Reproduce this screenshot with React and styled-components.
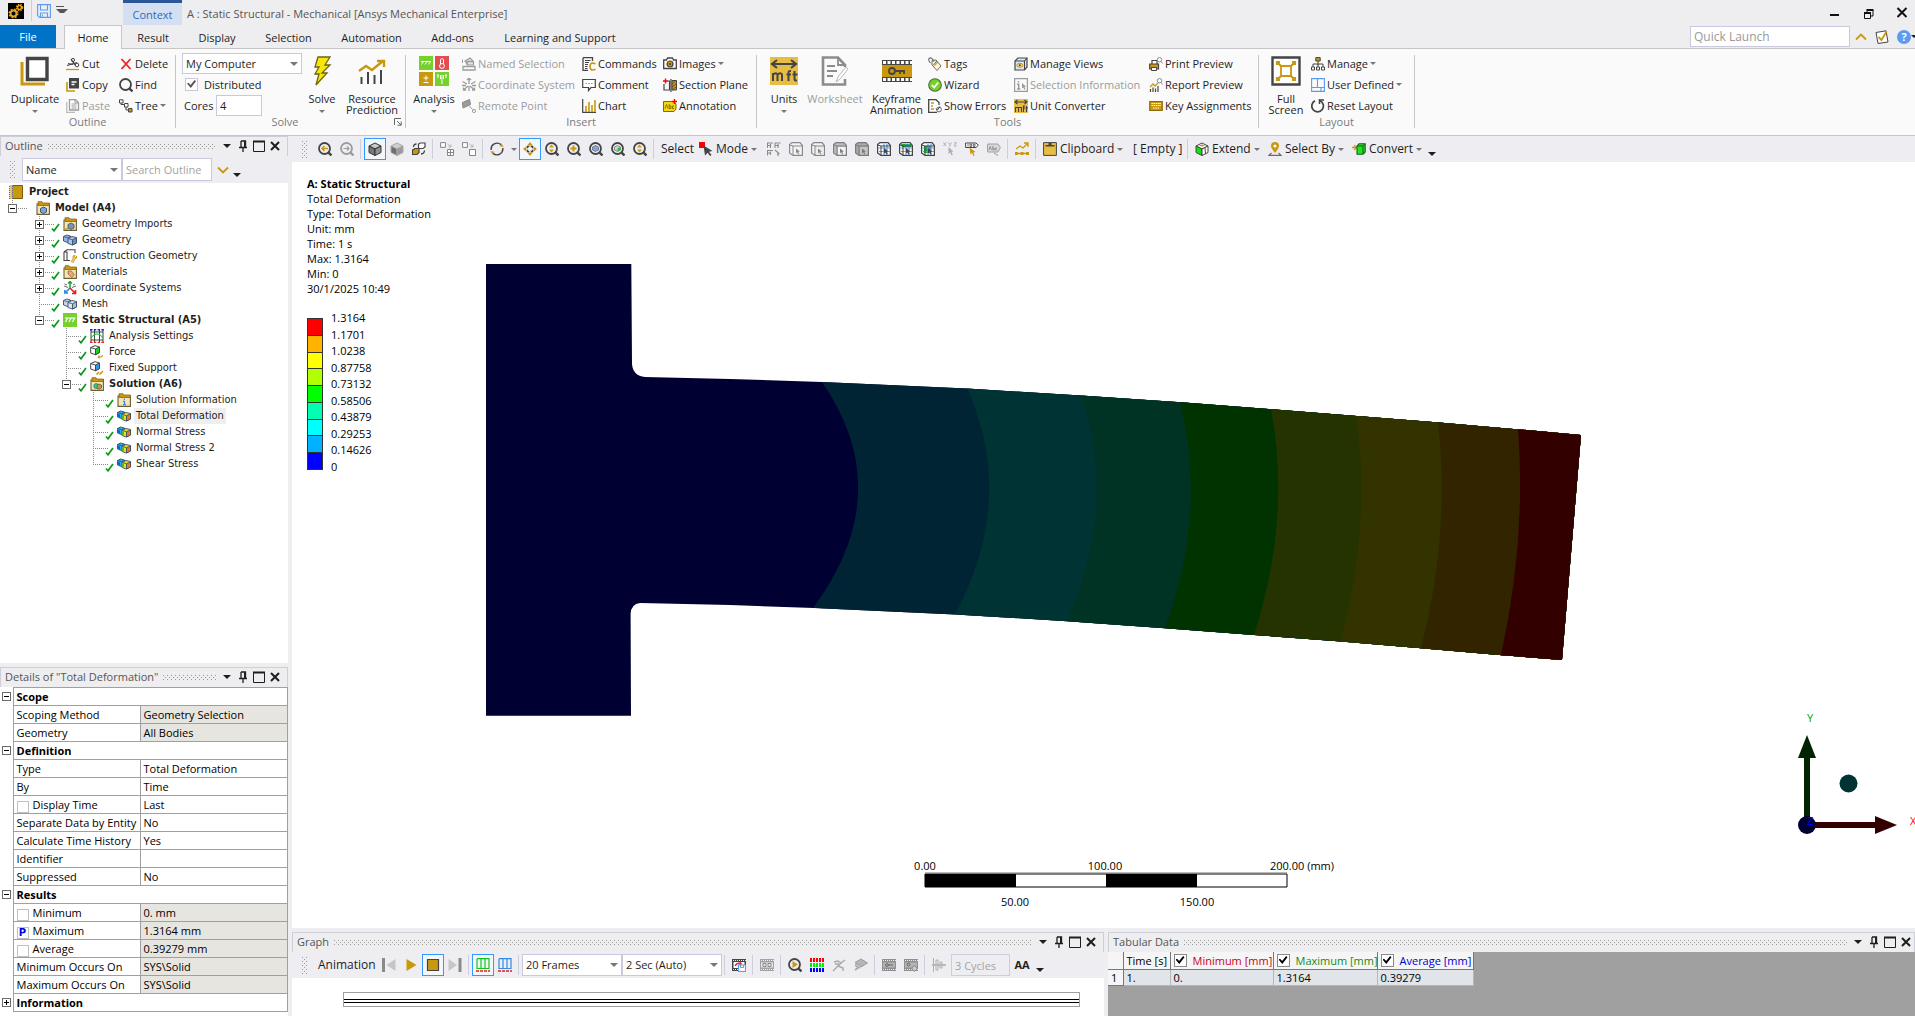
import React from "react";
import styled, { createGlobalStyle, css } from "styled-components";

const GOLD = "#c9980f";
const DARK = "#444444";
const GREY = "#9c9c9c";
const BLUE = "#5b9bf0";
const GREEN = "#77d12c";

/* ---------- shared icon pieces ---------- */

const lens = (color = DARK) => (
  <>
    <circle cx="6.5" cy="6.5" r="5.5" fill="none" stroke={color} strokeWidth="1.8" />
    <path d="M10.3 10.3L13.5 13.5" stroke={color} strokeWidth="2.4" />
  </>
);

const cube = (front, top, side, line = DARK) => (
  <>
    <path d="M1 4L7 1L13 4L7 7Z" fill={top} stroke={line} />
    <path d="M1 4L7 7V13.5L1 10.5Z" fill={front} stroke={line} />
    <path d="M13 4L7 7V13.5L13 10.5Z" fill={side} stroke={line} />
  </>
);

const pickCube = (face, top, line, arrow = line) => (
  <>
    <path d="M0.6 2.5L3 0.6H11L13.4 3.5V13.4H4L0.6 11Z" fill={top} stroke={line} strokeWidth="1.2" />
    <path d="M1 3L4 4V13M4 4H13" fill="none" stroke={line} />
    <path d="M5 5H12.5V12.5H5Z" fill={face} />
    <path d="M7 6.5L11 9.5L9.2 9.8L10.2 12L9.2 12.4L8.3 10.2L7 11.3Z" fill={arrow} />
  </>
);

const meshCube = (fill) => (
  <>
    <path d="M0.6 2.5L3 0.6H11L13.4 3.5V13.4H4L0.6 11Z" fill="#fff" stroke={DARK} strokeWidth="1.3" />
    {fill}
    <path d="M7 2V13M10 2V13M1.5 6H13M2 9.5H13" fill="none" stroke={BLUE} strokeWidth="1.2" />
    <path d="M1 3L4 4H13M4 4V13" fill="none" stroke={DARK} />
    <path d="M7 6L11.5 9.5L9.5 9.8L10.5 12L9.3 12.5L8.3 10.4L7 11.5Z" fill={DARK} />
  </>
);

const folder = (
  <>
    <path d="M1 3V13.4H13.4V3Z" fill="#f5e6b8" stroke="#6b5f3a" strokeWidth="1.1" />
    <path d="M2 3V0.7H6L7 2H13.4V4.5H2Z" fill={GOLD} stroke="#7b5c08" strokeWidth="0.7" />
  </>
);

const pairCubes = (a, b, c, line = "#3d4f63") => (
  <>
    <path d="M0.5 3.5L3.5 2L7.5 3V8.5L4.5 9.5L0.5 8Z" fill={a} stroke={line} strokeWidth="0.9" />
    <path d="M0.5 3.5L4.5 4.7L7.5 3.5" fill="none" stroke={line} strokeWidth="0.8" />
    <path d="M5 5.5L9 3.5L13.5 4.5V10L9.5 12L5 10.5Z" fill={b} stroke={line} strokeWidth="0.9" />
    <path d="M9.5 6.8L13.5 4.8V10L9.5 12Z" fill={c} stroke={line} strokeWidth="0.9" />
    <path d="M5 5.5L9.5 6.8" fill="none" stroke={line} strokeWidth="0.8" />
  </>
);

const film = (color, inner) => (
  <>
    <path d="M0 1H14V13H0Z" fill={color} />
    <path d="M1 2.5H14M1 11.5H14" stroke="#eeeef2" strokeWidth="1.2" strokeDasharray="1 1" />
    {inner}
  </>
);

const unitMark = (
  <>
    <path d="M0 0H14V14H0Z" fill="#e6bd45" />
    <path d="M1 3H13M3.5 1L1 3L3.5 5M10.5 1L13 3L10.5 5" fill="none" stroke={DARK} strokeWidth="1.2" />
    <path d="M1.5 13V8M1.5 8.5H4.5V13M4.5 8.5H7.5V13M9.5 13V7H11M8.8 9H11M12.5 7V13M11.5 9H14" fill="none" stroke={DARK} strokeWidth="1.1" />
  </>
);

const ICONS = {
  cut: (
    <>
      <path d="M0 12.5H13" stroke={GOLD} strokeWidth="1.3" />
      <path d="M1 8.5L11 5.5M5 2L9 8" stroke={DARK} strokeWidth="1.3" />
      <circle cx="7" cy="3" r="1.6" fill="none" stroke={DARK} />
      <circle cx="11" cy="8" r="1.8" fill="none" stroke={DARK} />
      <path d="M2 6.5L7 7.5" stroke={DARK} strokeWidth="1.2" />
    </>
  ),
  copy: (
    <>
      <path d="M1 4V13H9" fill="none" stroke={GOLD} strokeWidth="1.6" />
      <path d="M3 0H13V10.5H3Z" fill={DARK} />
      <path d="M5.5 4H10.5M5.5 6.5H8.5" stroke="#fff" strokeWidth="1.3" />
    </>
  ),
  paste: (
    <>
      <path d="M0.7 3V13.3H9" fill="none" stroke="#b9b9b9" strokeWidth="1.2" />
      <path d="M3.5 0.7H9.5L12.5 3.7V11H3.5Z" fill="#fff" stroke={GREY} strokeWidth="1.3" />
      <path d="M5.5 5H10.5M5.5 7H10.5M5.5 9H10.5M9 1V4H12" fill="none" stroke={GREY} />
    </>
  ),
  remove: <path d="M2.5 2L11.5 12M11.5 2L2.5 12" stroke="#f01c1c" strokeWidth="1.7" />,
  find: lens(),
  tree: (
    <>
      <path d="M2 3V5.5H7V11H9" fill="none" stroke={DARK} />
      <path d="M0.5 0.8H4V4H0.5ZM5.5 4.5H9V8H5.5Z" fill="#fff" stroke={DARK} />
      <path d="M9.5 9.5H13V13H9.5Z" fill={GOLD} stroke={DARK} />
    </>
  ),
  namedSel: (
    <>
      <path d="M3 4L8 1L11.5 4.5V8H5.5Z" fill="#e3e3e3" stroke={GREY} strokeWidth="1.2" />
      <path d="M5.5 8L5 4.5L11 4.5M1 9.5H13V13H1Z" fill="none" stroke={GREY} strokeWidth="1.3" />
      <path d="M0.5 2.5V6" stroke={GREY} />
    </>
  ),
  coordGrey: (
    <path d="M7 0V6M7 8V13M0.5 3.5L5 6M13.5 3.5L9 6M1.5 12L6 8M12.5 12L8 8M0 7.5H4M10 7.5H14M5 2L7 0L9 2M1.5 9.5V12H4M12.5 9.5V12H10" fill="none" stroke={GREY} strokeWidth="1.3" />
  ),
  remote: (
    <>
      <path d="M0.5 3.5L7.5 0.5L8.5 5.5L1 9Z" fill={GREY} stroke="#858585" />
      <path d="M7 6.5L10.5 10.5" stroke={GREY} />
      <circle cx="12" cy="12" r="1.6" fill="none" stroke={GREY} />
    </>
  ),
  commands: (
    <>
      <path d="M1 0.7H10.5V4M1 0.7V13.3H6" fill="none" stroke={DARK} strokeWidth="1.3" />
      <path d="M3 3.5H8.5M3 5.5H7M3 7.5H6M3 9.5H5.5M3 11.5H5.5" stroke={DARK} />
      <path d="M13.5 6.8Q8 4.5 8 9.5Q8 14.5 13.5 12.3" fill="none" stroke={GOLD} strokeWidth="1.7" />
    </>
  ),
  comment: (
    <>
      <path d="M0.7 1.5H13.3V9.5H9L6.5 12.5V9.5H0.7Z" fill="#fff" stroke={DARK} strokeWidth="1.2" />
      <path d="M3.5 5.5H11" stroke={GOLD} strokeWidth="1.2" strokeDasharray="1.5 1.3" />
    </>
  ),
  chart: (
    <>
      <path d="M0.7 0V13.3H14" fill="none" stroke={DARK} strokeWidth="1.2" />
      <path d="M4 13V7M7 13V3M10 13V6M13 13V1" stroke={GOLD} strokeWidth="1.6" />
    </>
  ),
  camera: (
    <>
      <path d="M1 3H3.5L4.5 1H9.5L10.5 3H13.3V11.5H0.7V3Z" fill="#fff" stroke={DARK} strokeWidth="1.3" />
      <circle cx="7" cy="7" r="3" fill={GOLD} stroke={DARK} strokeWidth="1.2" />
      <circle cx="7" cy="7" r="1.1" fill={DARK} />
    </>
  ),
  section: (
    <>
      <path d="M1 6V12H6.5V3H5M8 1V14" fill="none" stroke={DARK} strokeWidth="1.2" />
      <path d="M9 2.5H13.5V12H9Z" fill={GOLD} stroke={DARK} />
      <path d="M9 6L13 2.5M9 9L13.5 5.5M9 12L13.5 8.5" stroke={DARK} strokeWidth="0.8" />
      <path d="M0 3H5M2.5 0.5V5.5" stroke="#ff0000" strokeWidth="1.4" />
    </>
  ),
  annotation: (
    <>
      <path d="M0.5 2.5H10L13 5V10L11 12.5H0.5Z" fill="#f5d80c" stroke="#7b6a0a" />
      <path d="M2 9.5L3.5 5.5L5 9.5M6.2 5V9.5H8V7H6.2M11 7H9.5V9.5H11" fill="none" stroke="#7b6a0a" strokeWidth="0.9" />
      <path d="M9 2.5H14M11.5 0V5" stroke="#ff0000" strokeWidth="1.4" />
    </>
  ),
  tags: (
    <>
      <path d="M4 3.5L8 3L13 9L9 13.5L4 8Z" fill="#fff3d0" stroke="#6b6b6b" />
      <path d="M2.5 6Q0 3.5 1 1.5Q3.5 -0.5 6 4.5M5.5 8L9 4" fill="none" stroke="#6b6b6b" strokeWidth="1.1" />
      <path d="M6.5 9L10 5" stroke={GOLD} />
    </>
  ),
  wizard: (
    <>
      <circle cx="7" cy="7" r="6.3" fill={GREEN} stroke="#4c6b3a" strokeWidth="1.1" />
      <path d="M3.8 7L6.2 9.5L10.2 4.5" fill="none" stroke="#fff" strokeWidth="1.8" />
    </>
  ),
  errors: (
    <>
      <path d="M9 13.3H0.7V0.7H8L11 3.5V6" fill="#fff" stroke={DARK} strokeWidth="1.3" />
      <path d="M3 4H6M3 7H5M3 10H6" stroke={GOLD} strokeWidth="1.5" />
      <circle cx="11" cy="10.5" r="2.4" fill="none" stroke="#6b6b6b" />
      <path d="M8 9.5L9.5 11L12 7.5" fill="none" stroke={DARK} />
    </>
  ),
  views: (
    <>
      <path d="M1 4L4 1H13V10L10.5 13H1Z" fill="#dce9fb" stroke={DARK} strokeWidth="1.2" />
      <path d="M1 4H10.5V13M10.5 4L13 1" fill="none" stroke={DARK} strokeWidth="1.1" />
      <ellipse cx="5.8" cy="8.3" rx="3" ry="2" fill="#f0d898" stroke={GOLD} />
      <circle cx="5.8" cy="8.3" r="1" fill={DARK} />
    </>
  ),
  selInfo: (
    <>
      <path d="M0.6 0.6H13.4V13.4H0.6Z" fill="none" stroke={GREY} strokeWidth="1.2" />
      <path d="M4.5 3V4.5M3 6.3H4.7V11M3 11H6.3" fill="none" stroke={GREY} strokeWidth="1.5" />
      <path d="M8 5L12 8.5L10.5 9L11.5 11.5L10.3 11.5L9.5 9.5L8 10.5Z" fill={GREY} />
    </>
  ),
  unitMark,
  print: (
    <>
      <path d="M3 7V3.5H8V7" fill="#fff" stroke={DARK} strokeWidth="1.2" />
      <path d="M0.7 7H9.5V12H0.7Z" fill={GOLD} stroke={DARK} strokeWidth="1.2" />
      <path d="M2.5 10.5H7.5V13.5H2.5Z" fill="#fff" stroke={DARK} />
      <circle cx="10.5" cy="2.7" r="2.2" fill="#fff" stroke="#888" />
      <path d="M12 4.5L13.5 6.5" stroke="#888" />
    </>
  ),
  report: (
    <>
      <path d="M1 9L4 6L6 8L9 5" fill="none" stroke={GOLD} strokeWidth="1.3" />
      <path d="M1.5 14V11M4 14V9.5M6.5 14V10.5M9 14V8" stroke={DARK} strokeWidth="1.2" />
      <circle cx="10.5" cy="2.7" r="2.2" fill="#fff" stroke="#888" />
      <path d="M12 4.5L13.5 6.5" stroke="#888" />
    </>
  ),
  keys: (
    <>
      <path d="M0.7 2.5H13.3V11.5H0.7Z" fill={GOLD} stroke="#8a6a0a" strokeWidth="1.1" />
      <path d="M2.5 4.5H12M2.5 6.5H12M4 9H10" stroke="#fff4d0" strokeWidth="1.2" strokeDasharray="1.6 0.6" />
    </>
  ),
  orgChart: (
    <>
      <path d="M7 4V8M2 10V7H12V10M7 7V10" fill="none" stroke={DARK} />
      <path d="M4.8 0.6H9.2V4H4.8Z" fill={GOLD} stroke={DARK} />
      <path d="M0.5 10H3.5V13H0.5ZM5.5 10H8.5V13H5.5ZM10.5 10H13.5V13H10.5Z" fill="#fff" stroke={DARK} />
    </>
  ),
  panes: <path d="M0.6 0.6H13.4V13.4H0.6ZM0.6 9.5H13.4M6.5 0.6V9.5M10 9.5V13" fill="none" stroke={BLUE} strokeWidth="1.1" />,
  reset: (
    <>
      <path d="M9 1.7A5.8 5.8 0 1 1 4 1.8" fill="none" stroke={DARK} strokeWidth="1.7" />
      <path d="M8.5 0V5M8.5 1H13" fill="none" stroke={DARK} strokeWidth="1.5" />
    </>
  ),
  save: (
    <>
      <path d="M0.6 0.6H13.4V13.4H2.5L0.6 11.5Z" fill="none" stroke={BLUE} strokeWidth="1.1" />
      <path d="M3.5 1V6H10.5V1M3.5 13V9H10.5V13M5.5 10.5V12.5" fill="none" stroke={BLUE} strokeWidth="1.1" />
    </>
  ),
  zoomBack: (
    <>
      {lens()}
      <path d="M10 6.5H4M6.5 4L4 6.5L6.5 9" fill="none" stroke={GOLD} strokeWidth="1.5" />
    </>
  ),
  zoomFwd: (
    <>
      {lens(GREY)}
      <path d="M3.5 6.5H9M7 4.5L9 6.5L7 8.5" fill="none" stroke={GREY} strokeWidth="1.2" />
    </>
  ),
  shaded: cube("#777", "#c9c9c9", "#909090", "#333"),
  shadedFlat: cube("#6e6e6e", "#cfcfcf", "#9a9a9a", "#a8a8a8"),
  swapCube: (
    <>
      <path d="M0.5 8L3 6.5H7V10.5L5 12.5H0.5Z" fill={GOLD} stroke={DARK} strokeWidth="1.2" />
      <path d="M6.5 2L8.5 1H13V5L11 6.5H6.5Z" fill="#fff" stroke={DARK} strokeWidth="1.2" />
      <path d="M1.5 5Q1.5 2 4.5 2M12.5 8.5Q12.5 11.5 9 12" fill="none" stroke={DARK} strokeWidth="1.3" />
    </>
  ),
  expandBox: (
    <>
      <path d="M0.6 0.6H5.4V5.4H0.6ZM7.5 7.5H13.5V13.5H7.5ZM10.5 7.5V13.5M7.5 10.5H13.5" fill="#fff" stroke="#858585" />
      <path d="M7.5 2L11 5M11 2.5V5H8.5" fill="none" stroke="#b5b5b5" />
    </>
  ),
  collapseBox: (
    <>
      <path d="M0.6 0.6H5.4V5.4H0.6ZM7.5 7.5H13.5V13.5H7.5Z" fill="#fff" stroke="#858585" />
      <path d="M7.5 2L11 5M11 2.5V5H8.5" fill="none" stroke="#b5b5b5" />
    </>
  ),
  rotate: (
    <>
      <path d="M1.2 8A6 6 0 0 1 11 2.6M12.8 6A6 6 0 0 1 3 11.4" fill="none" stroke={DARK} strokeWidth="1.4" />
      <path d="M11.5 1.2L13.6 5L9.6 4.2ZM2.5 12.8L0.4 9L4.4 9.8Z" fill={GOLD} />
    </>
  ),
  pan: (
    <>
      <path d="M7 0L9.8 3.5H4.2ZM7 14L9.8 10.5H4.2ZM0 7L3.5 4.2V9.8ZM14 7L10.5 4.2V9.8Z" fill={GOLD} />
      <path d="M4.5 6.3V4.5H6.3M7.7 4.5H9.5V6.3M9.5 7.7V9.5H7.7M6.3 9.5H4.5V7.7" fill="none" stroke={DARK} strokeWidth="1.3" />
    </>
  ),
  zoomUpDown: (
    <>
      {lens()}
      <path d="M6.5 2.5L9 5.5H4ZM6.5 10.5L9 7.5H4Z" fill={GOLD} />
    </>
  ),
  zoomIn: (
    <>
      {lens()}
      <path d="M6.5 3.5V9.5M3.5 6.5H9.5" stroke={GOLD} strokeWidth="2" />
    </>
  ),
  zoomCube: (
    <>
      {lens()}
      <path d="M3.5 5L6.5 3.5L9.5 5V8L6.5 9.5L3.5 8Z" fill="#8ea6cc" stroke="#5a6b8a" strokeWidth="0.8" />
    </>
  ),
  zoomGreen: (
    <>
      {lens()}
      <path d="M3.5 5L6.5 3.5L9.5 5V8L6.5 9.5L3.5 8Z" fill="#d0d0d0" stroke="#777" strokeWidth="0.8" />
      <path d="M6.5 6.5L9.5 5V8L6.5 9.5Z" fill="#15c52a" />
    </>
  ),
  mode: (
    <>
      <path d="M0 0H6V6H0Z" fill="#ff0000" />
      <path d="M4.5 3.5L13.5 9L10 9.7L12.5 13L11 14L8.7 10.8L6 13.5Z" fill={DARK} />
    </>
  ),
  pickGrid: (
    <path d="M0.5 6V1H6M0.5 3.5H4M8 1H13.5M8 6V1M8 3.5H12M0.5 13.5V8.5H6M0.5 11H4M8 8L12 11.5L10.5 12L11.5 14M3.5 2V6M11 2V6M3.5 9.5V13" fill="none" stroke="#8a8a8a" strokeWidth="1.1" />
  ),
  pickVertex: pickCube("none", "#f4f4f4", "#8a8a8a"),
  pickEdge: pickCube("#ececec", "#f4f4f4", "#858585"),
  pickFace: pickCube("#f4f4f4", "#bdbdbd", "#808080"),
  pickBody: pickCube("#c4c4c4", "#a9a9a9", "#7a7a7a"),
  meshNode: meshCube(null),
  meshFace: meshCube(<path d="M2 2H12V5H3Z" fill="#19a82e" />),
  meshElem: meshCube(<path d="M3 4H10V11H3Z" fill="#19a82e" />),
  xyz: (
    <>
      <path d="M0.5 0.5L3 4M3 0.5L0.5 4M5.5 0.5L7 2.5L8.5 0.5M7 2.5V4.5M11 0.8H13.5L11 4H13.5" fill="none" stroke="#b0b0b0" />
      <path d="M5.5 5L10.5 9.5L8.5 9.8L9.8 13L8.5 13.5L7.3 10.5L5.5 12Z" fill="#b0b0b0" />
    </>
  ),
  probe: (
    <>
      <path d="M0.6 1H11L13.4 3.2L11 5.5H0.6Z" fill="#fff" stroke={DARK} />
      <path d="M3 2.2V4.5M5 2.2H6.6V4.4H5ZM8.4 2.2H10V4.4H8.4Z" fill="none" stroke={DARK} strokeWidth="0.8" />
      <path d="M4.5 5.5L10.5 10L8.5 10.3L9.5 13.5L8.3 14L7.2 10.8L5.5 12.5Z" fill={GOLD} />
    </>
  ),
  label: (
    <>
      <path d="M0.6 2H11L13.4 5.5L11 10H0.6Z" fill="#d8d8d8" stroke="#a0a0a0" />
      <path d="M2 8L3.2 4.5L4.5 8M5.8 4V8H7.2V6H5.8M10 6H8.7V8H10M7 11L11 13.5" fill="none" stroke="#8c8c8c" strokeWidth="0.9" />
    </>
  ),
  trend: (
    <>
      <path d="M1 7L5 4L8 6L12.5 1.5M9 1H13V5M1 11.5H13" fill="none" stroke={GOLD} strokeWidth="1.3" />
      <path d="M0 10H3V13H0ZM5.5 10H8.5V13H5.5ZM11 10H14V13H11Z" fill={GOLD} />
    </>
  ),
  clipboard: (
    <>
      <path d="M0.6 0.6H13.4V13.4H0.6Z" fill="#e6bd45" stroke={DARK} />
      <path d="M2.5 3H11.5V4.5H2.5ZM5.5 1H8.5V3H5.5Z" fill={DARK} />
    </>
  ),
  extend: (
    <>
      {cube("#0ce60c", "#fff", "#fff")}
      <path d="M4.5 3.5H9.5M7 2.2V5" stroke={GOLD} />
      <path d="M10 6L10.5 12" stroke={DARK} />
    </>
  ),
  pinMap: (
    <>
      <path d="M7 11Q3 6 3 4A4 4 0 0 1 11 4Q11 6 7 11Z" fill={GOLD} />
      <circle cx="7" cy="4" r="1.6" fill="#fff" />
      <path d="M3.5 11L1 13.3H13L10.5 11" fill="none" stroke="#6b6b6b" strokeWidth="1.2" />
    </>
  ),
  convert: (
    <>
      <path d="M0 5.5H4M2.2 3.2L4.5 5.5L2.2 8" fill="none" stroke={GOLD} strokeWidth="1.3" />
      <path d="M5 4L7 1.8H13.2V10L11 12.2H5Z" fill="#19e61e" stroke="#1c5a1c" strokeWidth="1.1" />
      <path d="M5 4H11V12M11 4L13 2" fill="none" stroke="#1c5a1c" />
    </>
  ),
  project: (
    <>
      <path d="M3 0.5H13.5V13.5H3Z" fill={GOLD} stroke="#7b5c08" />
      <path d="M2 0V14" stroke="#d9c48a" strokeWidth="3" />
      <path d="M0.5 1V14M3.5 1V14" stroke="#6b6b6b" strokeDasharray="1 1" />
    </>
  ),
  model: (
    <>
      {folder}
      <path d="M4.5 7.5L7.5 6L10.5 7.5V11L7.5 12.5L4.5 11Z" fill="#7ea4dc" stroke="#33496b" strokeWidth="0.9" />
    </>
  ),
  imports: (
    <>
      {folder}
      <path d="M5 7.5L8 6L11 7.5V11L8 12.5L5 11Z" fill="#7d93b5" stroke="#46566e" strokeWidth="0.9" />
      <path d="M1 12H5" stroke={GOLD} strokeWidth="1.5" />
    </>
  ),
  geometry: pairCubes("#8fb6e8", "#a9c8f2", "#5f90d2"),
  construction: (
    <>
      <path d="M1 3L4 0.7H12V4M1 3V11.5H7M1 3H4V11" fill="#fff" stroke={DARK} strokeWidth="1.1" />
      <path d="M8 13L10 9.5Q9 6.5 12 6L11.5 8L13 8.5L13.8 7Q14 10 11.5 10.5L10 14" fill="#f0cf70" stroke={GOLD} strokeWidth="0.8" />
    </>
  ),
  materials: (
    <>
      {folder}
      <path d="M5 6H8.5L11.5 10L8.8 12.5L5 9Z" fill="#eaa873" stroke="#9c6636" strokeWidth="0.8" />
    </>
  ),
  coords: (
    <>
      <path d="M7 7V1M5 2.5L7 0.5L9 2.5" fill="none" stroke="#19a82e" strokeWidth="1.5" />
      <path d="M7 7L2 12M1.8 9V12H5" fill="none" stroke="#2f8ae8" strokeWidth="1.6" />
      <path d="M7 7L12 12M12.5 9V12.5H9" fill="none" stroke="#e81c1c" strokeWidth="1.6" />
      <path d="M1 5L5 6.5M13 5L9 6.5M1.5 3L4 4M12 3L10 4" stroke="#6b6b6b" />
    </>
  ),
  mesh: pairCubes("#c7d5e8", "#dce6f4", "#a8bdd8"),
  staticStruct: (
    <>
      <path d="M0 0H14V14H0Z" fill={GREEN} />
      <path d="M2 5H12.5M4.5 5L2.5 9M8 5L6 9M11.5 5L9.5 9" fill="none" stroke="#fff" strokeWidth="1.2" />
    </>
  ),
  analysisSettings: (
    <>
      <path d="M1 1V13M4.5 1V13M9.5 1V13M13 1V13M1 3H13M1 11H13" fill="none" stroke={DARK} />
      <path d="M1 9Q7 1 13 9" fill="none" stroke="#19c52e" strokeWidth="1.2" />
      <path d="M0 0.7H14" stroke="#1c1cf0" strokeWidth="1.4" strokeDasharray="2.5 1.3" />
      <path d="M0 13.4H14" stroke="#e81c1c" strokeWidth="1.4" strokeDasharray="2.5 1.3" />
    </>
  ),
  force: (
    <>
      <path d="M0.7 2.5L5 0.7L9.5 2V7.5L5.5 9.7L0.7 8Z" fill="#fff" stroke={DARK} />
      <path d="M5.5 4L9.5 2V7.5L5.5 9.7Z" fill="#12d81e" stroke={DARK} />
      <path d="M0.7 2.5L5.5 4" stroke={DARK} />
      <path d="M8 12H11L13 10.5M8 12L9.5 10.8M8 12L9.5 13.3" fill="none" stroke={GOLD} strokeWidth="1.2" />
    </>
  ),
  support: (
    <>
      <path d="M0.7 2.5L5 0.7L9.5 2V7.5L5.5 9.7L0.7 8Z" fill="#fff" stroke={DARK} />
      <path d="M5.5 4L9.5 2V7.5L5.5 9.7Z" fill="#2f9af0" stroke={DARK} />
      <path d="M0.7 2.5L5.5 4" stroke={DARK} />
      <path d="M6.5 13.5L9 11M9.5 13.5L13 10" stroke={GOLD} strokeWidth="1.5" />
    </>
  ),
  solution: (
    <>
      {folder}
      <path d="M4 7.5L6 6.5L8 7.2V10.5L6 11.5L4 10.5Z" fill="#2ed8c8" stroke="#37575a" strokeWidth="0.7" />
      <path d="M7 8L9 7L11.5 8V11L9.2 12.3L7 11.3Z" fill="#e0902a" stroke="#37575a" strokeWidth="0.7" />
      <path d="M6 7V11" stroke="#2bc72b" />
    </>
  ),
  solInfo: (
    <>
      {folder}
      <path d="M7.3 5.5V7M6 8.3H7.5V11.5M6 11.7H9" fill="none" stroke="#2f8ae8" strokeWidth="1.2" />
    </>
  ),
  result: (
    <>
      {pairCubes("#1fb0e8", "#e6e02a", "#e87a1c")}
      <path d="M5.3 6L7 6.6V10.8L5.3 10.2Z" fill="#2bd02b" />
      <path d="M1 5L3 5.6V8.4L1 7.6Z" fill="#1c50e8" />
    </>
  ),
  first: (
    <>
      <path d="M1.5 0V14" stroke="#8a8a8a" strokeWidth="3" />
      <path d="M13.5 1V13L4.5 7Z" fill="#c6c6c6" />
    </>
  ),
  play: <path d="M2.5 1V13L12.5 7Z" fill={GOLD} />,
  stop: <path d="M1.5 1.5H12.5V12.5H1.5Z" fill={GOLD} stroke={DARK} strokeWidth="1.2" />,
  last: (
    <>
      <path d="M12 0V14" stroke="#8a8a8a" strokeWidth="3" />
      <path d="M0.5 1V13L9 7Z" fill="#c6c6c6" />
    </>
  ),
  framesGreen: (
    <>
      <path d="M1 0.7H13V11M1 0.7V11M5 1V11M9 1V11M1 10.5H13" fill="none" stroke="#12c51e" strokeWidth="1.2" />
      <path d="M0 13H14" stroke="#e81c1c" strokeWidth="1.4" strokeDasharray="3 1" />
    </>
  ),
  framesBlue: (
    <>
      <path d="M1 0.7H13V11M1 0.7V11M5 1V11M9 1V11M1 10.5H13" fill="none" stroke="#2f8ae8" strokeWidth="1.2" />
      <path d="M0 13H14" stroke="#e81c1c" strokeWidth="1.4" strokeDasharray="3 1" />
    </>
  ),
  exportVideo: (
    <>
      {film(DARK, <path d="M1.5 4H12.5V10H1.5Z" fill="#fff" />)}
      <path d="M3 8Q5 4 9 5.5L8 4M9 5.5L7.5 7" fill="none" stroke="#e81c1c" strokeWidth="1.2" />
      <path d="M6.5 7H13.5V13.5H6.5Z" fill="#fff" stroke={BLUE} strokeWidth="1.2" />
      <path d="M8.5 7V9.5H11.5V7" fill="none" stroke={BLUE} />
    </>
  ),
  filmGrey: film(
    "#a3a3a3",
    <>
      <path d="M1 4.5H13V9.5H1Z" fill="#e6e6e6" />
      <path d="M3 5.5H6V8.5H3ZM8 5.5H11V8.5H8Z" fill="none" stroke="#8a8a8a" />
    </>
  ),
  zoomPlay: (
    <>
      {lens()}
      <path d="M4.5 3L10 6.5L4.5 10Z" fill={GOLD} />
    </>
  ),
  rgbDots: (
    <>
      <path d="M0 2H14" stroke="#f00" strokeWidth="4" strokeDasharray="2 1" />
      <path d="M0 7H14" stroke="#0e0" strokeWidth="4" strokeDasharray="2 1" />
      <path d="M0 12H14" stroke="#00f" strokeWidth="4" strokeDasharray="2 1" />
    </>
  ),
  runner: <path d="M2 4L6 3L9 5L13 2M9 5L6 8L11 10V13M6 8L1 13M7 6H3" fill="none" stroke="#a8a8a8" strokeWidth="1.4" />,
  gun: (
    <>
      <path d="M1 4.5L7 1L13.5 5L7 9Z" fill="#b5b5b5" stroke="#9a9a9a" />
      <path d="M2 5.5V8L6 10M1 12L5 9" fill="none" stroke="#a8a8a8" strokeWidth="1.6" />
    </>
  ),
  keyFilm: film(
    "#8f8f8f",
    <>
      <path d="M1 4.5H13V9.5H1Z" fill="#b4b4b4" />
      <circle cx="5" cy="7" r="1.4" fill="none" stroke="#666" />
      <path d="M6.5 7H11" stroke="#666" />
    </>
  ),
  keyFilmAlt: film(
    "#8f8f8f",
    <>
      <path d="M1 4.5H13V9.5H1Z" fill="#b4b4b4" />
      <circle cx="4.5" cy="6.5" r="1.4" fill="none" stroke="#666" />
      <circle cx="10.5" cy="10.5" r="2.5" fill="#ccc" stroke="#888" />
    </>
  ),
  wave: (
    <>
      <path d="M0 7H14" stroke="#8a8a8a" />
      <path d="M1.5 0V14M4 2H6V12H4ZM8 4H10V10H8Z" fill="none" stroke="#b0b0b0" />
    </>
  ),
  notes: (
    <>
      <path d="M1 2.5L11 0.8L13 12L3 13.5Z" fill="#fff" stroke={DARK} />
      <path d="M3.5 7L6.5 10L11.5 1.5" fill="none" stroke={GOLD} strokeWidth="1.8" />
    </>
  ),
};

const BIG_ICONS = {
  duplicate: (
    <>
      <path d="M2 6V28H25" fill="none" stroke={GOLD} strokeWidth="3" />
      <path d="M7.5 2.5H27V23.5H7.5Z" fill="#fff" stroke={DARK} strokeWidth="3.4" />
    </>
  ),
  bolt: <path d="M11 1H23L18 9H23L15 17H20L9 29L12 18H8L12 11H8Z" fill="#f7e60a" stroke="#6b6416" strokeWidth="1.3" />,
  resource: (
    <>
      <path d="M2 15L9 10L15 14L26 5M20 5H27V11" fill="none" stroke={GOLD} strokeWidth="2.4" />
      <path d="M4.5 28V21M11 28V16M17.5 28V19M24 28V14" stroke={DARK} strokeWidth="2" />
    </>
  ),
  analysis: (
    <>
      <path d="M0 0H14V14H0ZM16 16H30V30H16Z" fill={GREEN} />
      <path d="M16 0H30V14H16Z" fill="#e34d4d" />
      <path d="M0 16H14V30H0Z" fill={GOLD} />
      <path d="M2 5.5H12M4.5 5.5L2.5 8.5M8 5.5L6 8.5M11.5 5.5L9.5 8.5M4.5 22H9.5M7 19.5V24.5M4.5 26.5H9.5M18 19H20M26 19H28M23 19V28M19 19V22M27 19V22M21.5 19V23M24.5 19V23" stroke="#fff" strokeWidth="1" />
      <path d="M21.5 8V3.5Q23 1.5 24.5 3.5V8" fill="none" stroke="#fff" />
      <circle cx="23" cy="10" r="2.4" fill="none" stroke="#fff" />
    </>
  ),
  units: (
    <>
      <path d="M1 1H29V29H1Z" fill="#e6bd45" />
      <path d="M4 8H26M8 4L3 8L8 12M22 4L27 8L22 12" fill="none" stroke={DARK} strokeWidth="2.2" />
      <path d="M4 25V17M4 18.5Q8.5 16 8.5 19V25M8.5 18.5Q13 16 13 19V25M19.5 25V17Q19.5 14.5 22 15M17.5 18.5H22M25.5 15V23Q25.5 25 28 24.5M23.5 18.5H28.5" fill="none" stroke={DARK} strokeWidth="2" />
    </>
  ),
  worksheet: (
    <>
      <path d="M25 11V9L18 1.5H3V28.5H25V23" fill="none" stroke="#8c8c8c" strokeWidth="2.6" />
      <path d="M18 1V9H25M7 10H15M7 15H17M7 20H13" fill="none" stroke="#8c8c8c" strokeWidth="1.8" />
      <path d="M16 26L18 21L26 11L28 13L20 23Z" fill="#fff" stroke="#b9b9b9" />
    </>
  ),
  keyframe: (
    <>
      <path d="M0 4H30V26H0Z" fill={DARK} />
      <path d="M0 9H30V21H0Z" fill={GOLD} />
      <path d="M1 6.5H30M1 23.5H30" stroke="#fff" strokeWidth="3" strokeDasharray="3 1.5" />
      <circle cx="10" cy="15" r="3" fill="none" stroke={DARK} strokeWidth="1.8" />
      <path d="M13 15H23M18 15V18M22 15V18" fill="none" stroke={DARK} strokeWidth="1.8" />
    </>
  ),
  fullscreen: (
    <>
      <path d="M1.5 1.5H28.5V28.5H1.5Z" fill="#fff" stroke={DARK} strokeWidth="2.4" />
      <path d="M10 10H20V20H10Z" fill="none" stroke={GOLD} strokeWidth="1.8" />
      <path d="M10 10L6 6M20 10L24 6M10 20L6 24M20 20L24 24M9 6H6V9M21 6H24V9M9 24H6V21M21 24H24V21" fill="none" stroke={GOLD} strokeWidth="2.2" />
    </>
  ),
};

function Icon({ name }) {
  return (
    <SmallSvg viewBox="0 0 14 14" aria-hidden="true">
      {ICONS[name]}
    </SmallSvg>
  );
}

/* ---------- data ---------- */

const TABS = [
  ["Result", 62],
  ["Display", 66],
  ["Selection", 77],
  ["Automation", 89],
  ["Add-ons", 73],
  ["Learning and Support", 142],
];

const TREE = [
  { level: 1, icon: "model", label: "Model (A4)", bold: true, box: "-", last: true },
  { level: 2, icon: "imports", label: "Geometry Imports", box: "+", ok: true },
  { level: 2, icon: "geometry", label: "Geometry", box: "+", ok: true },
  { level: 2, icon: "construction", label: "Construction Geometry", box: "+", ok: true },
  { level: 2, icon: "materials", label: "Materials", box: "+", ok: true },
  { level: 2, icon: "coords", label: "Coordinate Systems", box: "+", ok: true },
  { level: 2, icon: "mesh", label: "Mesh", ok: true },
  { level: 2, icon: "staticStruct", label: "Static Structural (A5)", bold: true, box: "-", ok: true, last: true },
  { level: 3, icon: "analysisSettings", label: "Analysis Settings", ok: true },
  { level: 3, icon: "force", label: "Force", ok: true },
  { level: 3, icon: "support", label: "Fixed Support", ok: true },
  { level: 3, icon: "solution", label: "Solution (A6)", bold: true, box: "-", ok: true, last: true },
  { level: 4, icon: "solInfo", label: "Solution Information", ok: true },
  { level: 4, icon: "result", label: "Total Deformation", ok: true, selected: true },
  { level: 4, icon: "result", label: "Normal Stress", ok: true },
  { level: 4, icon: "result", label: "Normal Stress 2", ok: true },
  { level: 4, icon: "result", label: "Shear Stress", ok: true, last: true },
];

const DETAILS = [
  { group: "Scope", box: "-" },
  { name: "Scoping Method", value: "Geometry Selection", locked: true },
  { name: "Geometry", value: "All Bodies", locked: true },
  { group: "Definition", box: "-" },
  { name: "Type", value: "Total Deformation" },
  { name: "By", value: "Time" },
  { name: "Display Time", value: "Last", mark: " " },
  { name: "Separate Data by Entity", value: "No" },
  { name: "Calculate Time History", value: "Yes" },
  { name: "Identifier", value: "" },
  { name: "Suppressed", value: "No" },
  { group: "Results", box: "-" },
  { name: "Minimum", value: "0. mm", locked: true, mark: " " },
  { name: "Maximum", value: "1.3164 mm", locked: true, mark: "P" },
  { name: "Average", value: "0.39279 mm", locked: true, mark: " " },
  { name: "Minimum Occurs On", value: "SYS\\Solid", locked: true },
  { name: "Maximum Occurs On", value: "SYS\\Solid", locked: true },
  { group: "Information", box: "+" },
];

const LEGEND_COLORS = ["#ff0000", "#ffb200", "#ffff00", "#b2ff00", "#00ff00", "#00ffb2", "#00ffff", "#00b2ff", "#0000ff"];
const LEGEND_VALUES = ["1.3164", "1.1701", "1.0238", "0.87758", "0.73132", "0.58506", "0.43879", "0.29253", "0.14626", "0"];

// each contour starts at its top point, bulges to `mid` and ends at its bottom point
const CONTOURS = [
  { top: [822, 382], mid: [858, 494], bottom: [813, 608], color: "#002433" },
  { top: [967, 388], mid: [989, 500], bottom: [955, 614], color: "#003333" },
  { top: [1081, 395], mid: [1096, 507], bottom: [1067, 621], color: "#003324" },
  { top: [1180, 402], mid: [1190, 514], bottom: [1165, 628], color: "#003300" },
  { top: [1271, 409], mid: [1277, 520], bottom: [1254, 635], color: "#243300" },
  { top: [1356, 415], mid: [1360, 527], bottom: [1340, 642], color: "#333300" },
  { top: [1438, 422], mid: [1440, 534], bottom: [1421, 648], color: "#332400" },
  { top: [1518, 429], mid: [1518, 540], bottom: [1501, 655], color: "#330000" },
];

const BODY_PATH =
  "M486 264H631.3L632 364Q633 376 645 377L730 379L822 382L967 388.6L1081 395.6L1181 402.3L1272 409.2L1357 416L1439 422.6L1519 429.4L1581 435" +
  "L1562 660L1502 655.2L1421 648.2L1341 641.6L1254 635L1165 628.2L1067 621.2L955 614.4L814 608L730 605L640 603Q631 604 630.6 614L631 715.7H486Z";

const contourPath = ({ top, mid, bottom }) => {
  const cx = 2 * mid[0] - (top[0] + bottom[0]) / 2;
  const cy = 2 * mid[1] - (top[1] + bottom[1]) / 2;
  return `M${top[0]} ${top[1]}Q${cx} ${cy} ${bottom[0]} ${bottom[1]}L1600 700V350Z`;
};

/* ---------- small components ---------- */

function RibbonItem({ icon, children, disabled, menu }) {
  return (
    <SmallButton type="button" disabled={disabled}>
      <Icon name={icon} />
      <span>{children}</span>
      {menu && <Caret />}
    </SmallButton>
  );
}

function BigItem({ icon, lines, disabled, menu }) {
  return (
    <BigButton type="button" disabled={disabled}>
      <BigSvg viewBox="0 0 30 30" aria-hidden="true">
        {BIG_ICONS[icon]}
      </BigSvg>
      {lines.map((line) => (
        <span key={line}>{line}</span>
      ))}
      {menu && <Caret />}
    </BigButton>
  );
}

function Tool({ icon, active }) {
  return (
    <ToolButton type="button" aria-label={icon} $active={active}>
      <Icon name={icon} />
    </ToolButton>
  );
}

function Dropdown({ label, value, width, height }) {
  return (
    <SelectBox $width={width} $height={height}>
      <select aria-label={label} defaultValue={value}>
        <option>{value}</option>
      </select>
      <Caret $large />
    </SelectBox>
  );
}

function PanelTitle({ children, flush }) {
  return (
    <PanelHeader $flush={flush}>
      <h2>{children}</h2>
      <Dots />
      <HeaderButton type="button" aria-label="Menu">
        <Caret $dark $large />
      </HeaderButton>
      <HeaderButton type="button" aria-label="Pin">
        <HeaderSvg viewBox="0 0 12 12">
          <path d="M4 1H8.5V7M4 1V7M2 7.5H10M6 7.5V12" fill="none" stroke="#1e1e1e" strokeWidth="1.3" />
          <path d="M8 1V7" stroke="#1e1e1e" strokeWidth="2" />
        </HeaderSvg>
      </HeaderButton>
      <HeaderButton type="button" aria-label="Maximize">
        <HeaderSvg viewBox="0 0 12 12">
          <path d="M0.5 1.5H11.5V11.5H0.5Z" fill="none" stroke="#1e1e1e" />
          <path d="M0 1.5H12" stroke="#1e1e1e" strokeWidth="2" />
        </HeaderSvg>
      </HeaderButton>
      <HeaderButton type="button" aria-label="Close">
        <HeaderSvg viewBox="0 0 12 12">
          <path d="M2 2L10 10M10 2L2 10" stroke="#1e1e1e" strokeWidth="2" />
        </HeaderSvg>
      </HeaderButton>
    </PanelHeader>
  );
}

/* ---------- page sections ---------- */

function TitleBar() {
  return (
    <TitleRow>
      <AppMark viewBox="0 0 16 16" aria-hidden="true">
        <path d="M0 0H16V16H0Z" fill="#000" />
        <circle cx="5.5" cy="10.5" r="3" fill="none" stroke="#e8a317" strokeWidth="2" />
        <circle cx="5.5" cy="10.5" r="4.3" fill="none" stroke="#e8a317" strokeWidth="1.4" strokeDasharray="1.7 1.7" />
        <circle cx="11.5" cy="4.5" r="2" fill="none" stroke="#e8a317" strokeWidth="1.6" />
        <circle cx="11.5" cy="4.5" r="3.2" fill="none" stroke="#e8a317" strokeWidth="1.2" strokeDasharray="1.3 1.3" />
      </AppMark>
      <QuickAccess>
        <HeaderButton type="button" aria-label="Save">
          <Icon name="save" />
        </HeaderButton>
        <HeaderButton type="button" aria-label="Customize">
          <OverflowMark />
        </HeaderButton>
      </QuickAccess>
      <ContextTab>Context</ContextTab>
      <WindowTitle>A : Static Structural - Mechanical [Ansys Mechanical Enterprise]</WindowTitle>
      <WindowButtons>
        <button type="button" aria-label="Minimize">
          <HeaderSvg viewBox="0 0 12 12">
            <path d="M1 8H10" stroke="#111" strokeWidth="2" />
          </HeaderSvg>
        </button>
        <button type="button" aria-label="Restore">
          <HeaderSvg viewBox="0 0 12 12">
            <path d="M1.5 6H7.5V11.5H1.5ZM4 5.5V3.5H10V9H8" fill="none" stroke="#111" />
            <path d="M1 6H8M3.5 3H10.5" stroke="#111" strokeWidth="1.8" />
          </HeaderSvg>
        </button>
        <button type="button" aria-label="Close">
          <HeaderSvg viewBox="0 0 12 12">
            <path d="M1.5 1L10.5 10M10.5 1L1.5 10" stroke="#111" strokeWidth="2" />
          </HeaderSvg>
        </button>
      </WindowButtons>
    </TitleRow>
  );
}

function TabBar() {
  return (
    <TabRow>
      <FileTab type="button">File</FileTab>
      <Tab type="button" $width={58} $active>
        Home
      </Tab>
      {TABS.map(([label, width]) => (
        <Tab type="button" key={label} $width={width}>
          {label}
        </Tab>
      ))}
      <QuickLaunch aria-label="Quick Launch" placeholder="Quick Launch" />
      <TabTools>
        <svg width="12" height="8" viewBox="0 0 12 8" aria-hidden="true">
          <path d="M1 6.5L6 1.5L11 6.5" fill="none" stroke={GOLD} strokeWidth="1.8" />
        </svg>
        <Icon name="notes" />
        <HelpButton type="button">
          <b>?</b>
          <Caret $dark />
        </HelpButton>
      </TabTools>
    </TabRow>
  );
}

function Ribbon() {
  return (
    <RibbonBar>
      <Group $width={176}>
        <GroupBody $pad={4} $cols="62px 53px 1fr">
          <BigItem icon="duplicate" lines={["Duplicate"]} menu />
          <Stack>
            <RibbonItem icon="cut">Cut</RibbonItem>
            <RibbonItem icon="copy">Copy</RibbonItem>
            <RibbonItem icon="paste" disabled>Paste</RibbonItem>
          </Stack>
          <Stack>
            <RibbonItem icon="remove">Delete</RibbonItem>
            <RibbonItem icon="find">Find</RibbonItem>
            <RibbonItem icon="tree" menu>Tree</RibbonItem>
          </Stack>
        </GroupBody>
        <GroupName>Outline</GroupName>
      </Group>
      <Group $width={230}>
        <GroupBody $pad={6} $cols="120px 40px 60px">
          <Stack>
            <Dropdown label="Solve target" value="My Computer" width={120} height={21} />
            <CheckLabel>
              <Check type="checkbox" defaultChecked />
              Distributed
            </CheckLabel>
            <CoresLabel>
              Cores
              <input defaultValue="4" />
            </CoresLabel>
          </Stack>
          <BigItem icon="bolt" lines={["Solve"]} menu />
          <BigItem icon="resource" lines={["Resource", "Prediction"]} />
        </GroupBody>
        <GroupFooter>
          <GroupName>Solve</GroupName>
          <svg width="8" height="8" viewBox="0 0 8 8" aria-hidden="true">
            <path d="M0.5 7V0.5H7M3 3L7 7M7.2 3.5V7.2H3.5" fill="none" stroke="#666" />
          </svg>
        </GroupFooter>
      </Group>
      <Group $width={351}>
        <GroupBody $pad={0} $cols="56px 120px 81px 1fr">
          <BigItem icon="analysis" lines={["Analysis"]} menu />
          <Stack>
            <RibbonItem icon="namedSel" disabled>Named Selection</RibbonItem>
            <RibbonItem icon="coordGrey" disabled>Coordinate System</RibbonItem>
            <RibbonItem icon="remote" disabled>Remote Point</RibbonItem>
          </Stack>
          <Stack>
            <RibbonItem icon="commands">Commands</RibbonItem>
            <RibbonItem icon="comment">Comment</RibbonItem>
            <RibbonItem icon="chart">Chart</RibbonItem>
          </Stack>
          <Stack>
            <RibbonItem icon="camera" menu>Images</RibbonItem>
            <RibbonItem icon="section">Section Plane</RibbonItem>
            <RibbonItem icon="annotation">Annotation</RibbonItem>
          </Stack>
        </GroupBody>
        <GroupName>Insert</GroupName>
      </Group>
      <Group $width={502}>
        <GroupBody $pad={6} $cols="42px 60px 63px 86px 135px 1fr">
          <BigItem icon="units" lines={["Units"]} menu />
          <BigItem icon="worksheet" lines={["Worksheet"]} disabled />
          <BigItem icon="keyframe" lines={["Keyframe", "Animation"]} />
          <Stack>
            <RibbonItem icon="tags">Tags</RibbonItem>
            <RibbonItem icon="wizard">Wizard</RibbonItem>
            <RibbonItem icon="errors">Show Errors</RibbonItem>
          </Stack>
          <Stack>
            <RibbonItem icon="views">Manage Views</RibbonItem>
            <RibbonItem icon="selInfo" disabled>Selection Information</RibbonItem>
            <RibbonItem icon="unitMark">Unit Converter</RibbonItem>
          </Stack>
          <Stack>
            <RibbonItem icon="print">Print Preview</RibbonItem>
            <RibbonItem icon="report">Report Preview</RibbonItem>
            <RibbonItem icon="keys">Key Assignments</RibbonItem>
          </Stack>
        </GroupBody>
        <GroupName>Tools</GroupName>
      </Group>
      <Group $width={156}>
        <GroupBody $pad={2} $cols="50px 1fr">
          <BigItem icon="fullscreen" lines={["Full", "Screen"]} />
          <Stack>
            <RibbonItem icon="orgChart" menu>Manage</RibbonItem>
            <RibbonItem icon="panes" menu>User Defined</RibbonItem>
            <RibbonItem icon="reset">Reset Layout</RibbonItem>
          </Stack>
        </GroupBody>
        <GroupName>Layout</GroupName>
      </Group>
    </RibbonBar>
  );
}

function OutlinePanel() {
  return (
    <OutlineBox>
      <PanelTitle>Outline</PanelTitle>
      <FilterRow>
        <Grip />
        <Dropdown label="Filter by" value="Name" width={100} height={23} />
        <SearchInput aria-label="Search Outline" placeholder="Search Outline" />
        <svg width="12" height="8" viewBox="0 0 12 8" aria-hidden="true">
          <path d="M1 1.5L6 6.5L11 1.5" fill="none" stroke={GOLD} strokeWidth="1.8" />
        </svg>
        <OverflowCaret />
      </FilterRow>
      <Tree>
        <ProjectRow>
          <Icon name="project" />
          <TreeLabel $bold>Project</TreeLabel>
        </ProjectRow>
        {TREE.map((node) => (
          <TreeRow key={node.label} $level={node.level}>
            <Branch $last={node.last}>
              {node.box && <Box $plus={node.box === "+"} />}
              {node.ok && (
                <CheckMark viewBox="0 0 9 9" aria-hidden="true">
                  <path d="M1 5.5L3 7.8L8 1" fill="none" stroke="#0a9a1a" strokeWidth="1.7" />
                </CheckMark>
              )}
            </Branch>
            <Icon name={node.icon} />
            <TreeLabel $bold={node.bold} $selected={node.selected}>
              {node.label}
            </TreeLabel>
          </TreeRow>
        ))}
      </Tree>
    </OutlineBox>
  );
}

function DetailsPanel() {
  return (
    <DetailsBox>
      <PanelTitle>Details of "Total Deformation"</PanelTitle>
      <DetailsTable>
        <colgroup>
          <GutterCol />
          <NameCol />
          <col />
        </colgroup>
        <tbody>
          {DETAILS.map((row) =>
            row.group ? (
              <tr key={row.group}>
                <GutterCell>
                  <Box $plus={row.box === "+"} />
                </GutterCell>
                <th colSpan="2">{row.group}</th>
              </tr>
            ) : (
              <tr key={row.name}>
                <GutterCell />
                <td>
                  {row.mark && <ParamBox>{row.mark}</ParamBox>}
                  {row.name}
                </td>
                <ValueCell $locked={row.locked}>{row.value}</ValueCell>
              </tr>
            )
          )}
        </tbody>
      </DetailsTable>
    </DetailsBox>
  );
}

function ViewToolbar() {
  return (
    <ToolbarRow>
      <Grip />
      <Tool icon="zoomBack" />
      <Tool icon="zoomFwd" />
      <Divider />
      <Tool icon="shaded" active />
      <Tool icon="shadedFlat" />
      <Tool icon="swapCube" />
      <Divider />
      <Tool icon="expandBox" />
      <Tool icon="collapseBox" />
      <Divider />
      <Tool icon="rotate" />
      <ToolCaret />
      <Tool icon="pan" active />
      <Tool icon="zoomUpDown" />
      <Tool icon="zoomIn" />
      <Tool icon="zoomCube" />
      <Tool icon="zoomGreen" />
      <Tool icon="zoomUpDown" />
      <Divider />
      <ToolText $width={38}>Select</ToolText>
      <ToolText as="button" $width={68}>
        <Icon name="mode" />
        Mode
        <Caret />
      </ToolText>
      {["pickGrid", "pickVertex", "pickEdge", "pickFace", "pickBody", "meshNode", "meshFace", "meshElem", "xyz", "probe", "label"].map((icon) => (
        <Tool key={icon} icon={icon} />
      ))}
      <Divider />
      <Tool icon="trend" />
      <Divider />
      <ToolText as="button" $width={90}>
        <Icon name="clipboard" />
        Clipboard
        <Caret />
      </ToolText>
      <ToolText $width={56}>[ Empty ]</ToolText>
      <Divider />
      <ToolText as="button" $width={73}>
        <Icon name="extend" />
        Extend
        <Caret />
      </ToolText>
      <ToolText as="button" $width={84}>
        <Icon name="pinMap" />
        Select By
        <Caret />
      </ToolText>
      <ToolText as="button" $width={76}>
        <Icon name="convert" />
        Convert
        <Caret />
      </ToolText>
      <OverflowCaret />
    </ToolbarRow>
  );
}

function Viewport() {
  return (
    <ViewportBox>
      <Scene viewBox="292 162 1623 766" role="img" aria-label="Total deformation contour plot">
        <defs>
          <clipPath id="body">
            <path d={BODY_PATH} />
          </clipPath>
        </defs>
        <path d={BODY_PATH} fill="#000033" />
        <g clipPath="url(#body)">
          {CONTOURS.map((c) => (
            <path key={c.color} d={contourPath(c)} fill={c.color} />
          ))}
        </g>
        <g>
          <path d="M925 874H1287V887H925Z" fill="#fff" stroke="#000" />
          <path d="M925 874H1016V887H925ZM1106 874H1197V887H1106Z" fill="#000" />
          <path d="M925 873H1287" stroke="#777" />
          <text x="925" y="870" textAnchor="middle">0.00</text>
          <text x="1105" y="870" textAnchor="middle">100.00</text>
          <text x="1270" y="870">200.00 (mm)</text>
          <text x="1015" y="906" textAnchor="middle">50.00</text>
          <text x="1197" y="906" textAnchor="middle">150.00</text>
        </g>
        <g>
          <path d="M1807 825V756" stroke="#002400" strokeWidth="6" />
          <path d="M1807 735L1816 758H1798Z" fill="#002400" />
          <path d="M1807 825H1876" stroke="#330000" strokeWidth="6" />
          <path d="M1897 825L1875 834V816Z" fill="#330000" />
          <circle cx="1807" cy="825" r="9" fill="#000033" />
          <circle cx="1848.5" cy="783.5" r="9" fill="#003333" />
          <text x="1807" y="722" fill="#00a000">Y</text>
          <text x="1807" y="825" fill="#0000ff">Z</text>
          <text x="1910" y="825" fill="#ff0000">X</text>
        </g>
      </Scene>
      <PlotInfo>
        <b>A: Static Structural</b>
        <span>Total Deformation</span>
        <span>Type: Total Deformation</span>
        <span>Unit: mm</span>
        <span>Time: 1 s</span>
        <span>Max: 1.3164</span>
        <span>Min: 0</span>
        <span>30/1/2025 10:49</span>
        <Legend>
          <LegendBar>
            {LEGEND_COLORS.map((color) => (
              <Swatch key={color} $color={color} />
            ))}
          </LegendBar>
          <LegendLabels>
            {LEGEND_VALUES.map((value) => (
              <span key={value}>{value}</span>
            ))}
          </LegendLabels>
        </Legend>
      </PlotInfo>
    </ViewportBox>
  );
}

function GraphPanel() {
  return (
    <BottomPanel>
      <PanelTitle>Graph</PanelTitle>
      <ToolbarRow>
        <Grip />
        <ToolText $width={64}>Animation</ToolText>
        <Tool icon="first" />
        <Tool icon="play" />
        <Tool icon="stop" active />
        <Tool icon="last" />
        <Divider />
        <Tool icon="framesGreen" active />
        <Tool icon="framesBlue" />
        <Divider />
        <Dropdown label="Frames" value="20 Frames" width={100} height={22} />
        <Dropdown label="Duration" value="2 Sec (Auto)" width={100} height={22} />
        <Divider />
        <Tool icon="exportVideo" />
        <Divider />
        <Tool icon="filmGrey" />
        <Divider />
        <Tool icon="zoomPlay" />
        <Tool icon="rgbDots" />
        <Tool icon="runner" />
        <Tool icon="gun" />
        <Divider />
        <Tool icon="keyFilm" />
        <Tool icon="keyFilmAlt" />
        <Divider />
        <Tool icon="wave" />
        <CyclesInput aria-label="Cycles" defaultValue="3 Cycles" disabled />
        <TextTool type="button">AA</TextTool>
        <OverflowCaret />
      </ToolbarRow>
      <GraphArea>
        <Timeline />
      </GraphArea>
    </BottomPanel>
  );
}

function TabularPanel() {
  return (
    <BottomPanel $grey>
      <PanelTitle flush>Tabular Data</PanelTitle>
      <DataTable>
        <thead>
          <tr>
            <HeadCell $width={15} aria-label="Row" />
            <HeadCell $width={47}>Time [s]</HeadCell>
            <HeadCell $width={103}>
              <HeadLabel $color="#c8001e">
                <Check type="checkbox" defaultChecked $sunken />
                Minimum [mm]
              </HeadLabel>
            </HeadCell>
            <HeadCell $width={104}>
              <HeadLabel $color="#148a14">
                <Check type="checkbox" defaultChecked $sunken />
                Maximum [mm]
              </HeadLabel>
            </HeadCell>
            <HeadCell $width={96}>
              <HeadLabel $color="#0000c8">
                <Check type="checkbox" defaultChecked $sunken />
                Average [mm]
              </HeadLabel>
            </HeadCell>
          </tr>
        </thead>
        <tbody>
          <tr>
            <th>1</th>
            <td>1.</td>
            <td>0.</td>
            <td>1.3164</td>
            <td>0.39279</td>
          </tr>
        </tbody>
      </DataTable>
    </BottomPanel>
  );
}

export default function App() {
  return (
    <>
      <GlobalStyle />
      <Shell>
        <TitleBar />
        <TabBar />
        <Ribbon />
        <Workspace>
          <SideColumn>
            <OutlinePanel />
            <DetailsPanel />
          </SideColumn>
          <MainColumn>
            <ViewToolbar />
            <Viewport />
            <BottomRow>
              <GraphPanel />
              <TabularPanel />
            </BottomRow>
          </MainColumn>
        </Workspace>
      </Shell>
    </>
  );
}

/* ---------- styles ---------- */

const GlobalStyle = createGlobalStyle`
  * {
    box-sizing: border-box;
  }
  body {
    margin: 0;
    overflow: hidden;
    background: #eeeef0;
    color: #1e1e1e;
    font: 11px/14px "Open Sans", "Noto Sans", sans-serif;
  }
  button, input, select {
    margin: 0;
    padding: 0;
    border: 0;
    background: none;
    color: inherit;
    font: inherit;
  }
  svg {
    display: block;
    flex: none;
  }
`;

const Shell = styled.div`
  display: flex;
  flex-direction: column;
  height: 100vh;
  white-space: nowrap;
`;

const SmallSvg = styled.svg`
  width: 14px;
  height: 14px;
`;

const BigSvg = styled.svg`
  width: 30px;
  height: 30px;
  margin-bottom: 7px;
`;

const HeaderSvg = styled.svg`
  width: 12px;
  height: 12px;
`;

const Caret = styled.i`
  flex: none;
  width: 0;
  border: ${(p) => (p.$large ? 4 : 3)}px solid transparent;
  border-top-color: ${(p) => (p.$dark ? "#1e1e1e" : "#777")};
  border-bottom: 0;
`;

const ToolCaret = styled(Caret)`
  margin: 0 2px 0 3px;
`;

const OverflowCaret = styled(Caret).attrs({ $dark: true, $large: true })`
  align-self: flex-end;
  margin: 0 0 6px 4px;
`;

const OverflowMark = styled.i`
  display: block;
  border: 4px solid transparent;
  border-top-color: #555;
  border-bottom: 0;
  &::before {
    content: "";
    display: block;
    width: 8px;
    height: 1px;
    margin: -7px 0 0 -4px;
    background: #555;
  }
`;

const dot = css`conic-gradient(from 270deg at 1px 1px, #9a9a9a 90deg, transparent 0)`;

const Dots = styled.div`
  flex: 1;
  height: 5px;
  margin: 0 3px 0 5px;
  background: ${dot} 0 0 / 4px 4px, ${dot} 2px 2px / 4px 4px;
`;

const Grip = styled.div`
  flex: none;
  width: 5px;
  height: 17px;
  margin: 0 7px 0 10px;
  background: ${dot} 0 0 / 4px 4px, ${dot} 2px 2px / 4px 4px;
`;

const TitleRow = styled.header`
  display: flex;
  align-items: center;
  height: 25px;
  padding-left: 8px;
`;

const AppMark = styled.svg`
  width: 16px;
  height: 16px;
  margin: 0 7px 4px 0;
`;

const QuickAccess = styled.div`
  display: flex;
  align-items: center;
  align-self: flex-start;
  gap: 2px;
  width: 92px;
  height: 21px;
  padding-left: 4px;
  border-left: 1px solid #ccced8;
`;

const ContextTab = styled.div`
  width: 59px;
  height: 25px;
  border-top: 3px solid #2b579a;
  background: #d5dff2;
  color: #2f69bd;
  line-height: 23px;
  text-align: center;
`;

const WindowTitle = styled.h1`
  flex: 1;
  margin: 3px 0 0 5px;
  color: #555;
  font-size: 11px;
  font-weight: 400;
`;

const WindowButtons = styled.div`
  display: flex;
  width: 102px;
  justify-content: space-between;
  padding: 0 7px 0 16px;
`;

const TabRow = styled.nav`
  display: flex;
  height: 24px;
  border-bottom: 1px solid #c6c6c6;
`;

const Tab = styled.button`
  width: ${(p) => p.$width}px;
  height: 24px;
  padding-top: 1px;
  text-align: center;
  ${(p) =>
    p.$active &&
    css`
      border: 1px solid #c6c6c6;
      border-bottom: 0;
      background: #fafafa;
    `}
`;

const FileTab = styled.button`
  width: 56px;
  height: 23px;
  margin-right: 8px;
  background: #0173c7;
  color: #fff;
`;

const QuickLaunch = styled.input`
  width: 160px;
  height: 21px;
  margin: 1px 5px 0 auto;
  padding: 0 3px;
  border: 1px solid #c8c9dc;
  background: #fff;
  font-size: 12px;
  &::placeholder {
    color: #9a9a9a;
  }
`;

const TabTools = styled.div`
  display: flex;
  align-items: center;
  gap: 8px;
  width: 60px;
`;

const HelpButton = styled.button`
  display: flex;
  align-items: center;
  b {
    width: 14px;
    height: 14px;
    border-radius: 50%;
    background: #5b9bf0;
    color: #fff;
    font-size: 11px;
    line-height: 14px;
  }
`;

const RibbonBar = styled.section`
  display: flex;
  height: 87px;
  padding: 6px 0 7px;
  border-bottom: 1px solid #c6c6c6;
  background: #fafafa;
`;

const Group = styled.div`
  flex: none;
  width: ${(p) => p.$width}px;
  border-right: 1px solid #c6c6c6;
`;

const GroupBody = styled.div`
  display: grid;
  grid-template-columns: ${(p) => p.$cols};
  height: 61px;
  padding-left: ${(p) => p.$pad}px;
`;

const GroupName = styled.div`
  flex: 1;
  color: #7a7a7a;
  line-height: 12px;
  text-align: center;
`;

const GroupFooter = styled.div`
  display: flex;
  align-items: center;
  padding-right: 3px;
`;

const Stack = styled.div`
  display: flex;
  flex-direction: column;
  min-width: 0;
  margin-top: -2px;
`;

const SmallButton = styled.button`
  display: flex;
  align-items: center;
  gap: 2px;
  height: 21px;
  &:disabled {
    color: #9c9c9c;
  }
`;

const BigButton = styled.button`
  display: flex;
  flex-direction: column;
  align-items: center;
  padding-top: 1px;
  line-height: 11px;
  &:disabled {
    color: #9c9c9c;
  }
  i {
    margin-top: 6px;
  }
`;

const SelectBox = styled.span`
  display: grid;
  align-items: center;
  flex: none;
  width: ${(p) => p.$width}px;
  height: ${(p) => p.$height}px;
  border: 1px solid #c8c9dc;
  background: #fff;
  select {
    grid-area: 1 / 1;
    width: 100%;
    height: 100%;
    padding-left: 3px;
    appearance: none;
    outline: none;
  }
  i {
    grid-area: 1 / 1;
    justify-self: end;
    margin-right: 3px;
    pointer-events: none;
  }
`;

const CheckLabel = styled.label`
  display: flex;
  align-items: center;
  gap: 6px;
  height: 21px;
  padding-left: 3px;
`;

const Check = styled.input`
  flex: none;
  width: 13px;
  height: 13px;
  border: 1px solid ${(p) => (p.$sunken ? "#8a8a8a" : "#c8c9dc")};
  background: #fff;
  appearance: none;
  &:checked::before {
    content: "";
    display: block;
    width: 9px;
    height: 8px;
    margin: 1px;
    background: ${(p) => (p.$sunken ? "#000" : "#555")};
    clip-path: polygon(0 45%, 18% 35%, 40% 62%, 85% 0, 100% 15%, 42% 100%);
  }
`;

const CoresLabel = styled.label`
  display: flex;
  align-items: center;
  justify-content: space-between;
  width: 80px;
  height: 21px;
  padding-left: 2px;
  input {
    width: 46px;
    height: 21px;
    padding-left: 3px;
    border: 1px solid #c8c9dc;
    background: #fff;
  }
`;

const Workspace = styled.main`
  display: flex;
  flex: 1;
  gap: 4px;
  min-height: 0;
`;

const SideColumn = styled.aside`
  display: flex;
  flex-direction: column;
  gap: 4px;
  flex: none;
  width: 288px;
`;

const MainColumn = styled.div`
  display: flex;
  flex: 1;
  flex-direction: column;
  min-width: 0;
`;

const PanelHeader = styled.header`
  display: flex;
  align-items: center;
  flex: none;
  height: 20px;
  padding: 0 ${(p) => (p.$flush ? 0 : 4)}px 1px 4px;
  border: 1px solid #ccceda;
  border-bottom: 0;
  h2 {
    margin: 0;
    color: #555;
    font-size: 11px;
    font-weight: 400;
  }
`;

const HeaderButton = styled.button`
  display: grid;
  place-items: center;
  min-width: 16px;
  height: 16px;
`;

const OutlineBox = styled.section`
  display: flex;
  flex: 1;
  flex-direction: column;
  min-height: 0;
`;

const FilterRow = styled.div`
  display: flex;
  align-items: center;
  height: 27px;
  padding-right: 8px;
  background: #eeeef2;
`;

const SearchInput = styled.input`
  width: 90px;
  height: 23px;
  margin-right: 5px;
  padding-left: 3px;
  border: 1px solid #c8c9dc;
  background: #fff;
  &::placeholder {
    color: #a3a3a3;
  }
`;

const Tree = styled.div`
  flex: 1;
  overflow: hidden;
  padding-top: 1px;
  background: #fff;
  font: 11px/16px "DejaVu Sans Condensed", "Open Sans", sans-serif;
`;

const ProjectRow = styled.div`
  display: flex;
  align-items: center;
  height: 16px;
  padding-left: 9px;
  gap: 4px;
`;

const TreeRow = styled.div`
  display: flex;
  align-items: center;
  gap: 3px;
  height: 16px;
  padding-left: ${(p) => 8 + (p.$level - 1) * 27}px;
`;

const Branch = styled.span`
  display: flex;
  align-items: center;
  align-self: stretch;
  justify-content: space-between;
  width: 25px;
  background:
    repeating-linear-gradient(90deg, #8a8a8a 0 1px, transparent 1px 2px) 4px 8px / 15px 1px no-repeat,
    repeating-linear-gradient(#8a8a8a 0 1px, transparent 1px 2px) 4px 0 / 1px ${(p) => (p.$last ? "8px" : "16px")} no-repeat;
`;

const Box = styled.i`
  display: block;
  flex: none;
  width: 9px;
  height: 9px;
  border: 1px solid #6b6b6b;
  background:
    linear-gradient(#000, #000) 1px 3px / 5px 1px no-repeat,
    linear-gradient(#000, #000) 3px 1px / 1px ${(p) => (p.$plus ? 5 : 0)}px no-repeat,
    #fff;
`;

const CheckMark = styled.svg`
  width: 9px;
  height: 9px;
  margin: 7px 0 0 auto;
`;

const TreeLabel = styled.span`
  padding: 0 2px;
  background: ${(p) => (p.$selected ? "#efefef" : "none")};
  font-weight: ${(p) => (p.$bold ? 700 : 400)};
`;

const DetailsBox = styled.section`
  flex: none;
  padding-bottom: 4px;
  background: #fff;
  ${PanelHeader} {
    background: #eeeef0;
  }
`;

const DetailsTable = styled.table`
  width: 100%;
  border-collapse: collapse;
  table-layout: fixed;
  color: #000;
  th,
  td {
    height: 18px;
    padding: 0 3px;
    border: 1px solid #a0a0a0;
    line-height: 16px;
    text-align: left;
  }
`;

const GutterCol = styled.col`
  width: 13px;
`;

const NameCol = styled.col`
  width: 127px;
`;

const GutterCell = styled.td`
  && {
    padding: 0 2px;
    border-width: 0 1px 0 0;
  }
`;

const ValueCell = styled.td`
  background: ${(p) => (p.$locked ? "#e7e5e0" : "#fff")};
`;

const ParamBox = styled.span`
  display: inline-block;
  width: 12px;
  height: 12px;
  margin-right: 4px;
  border: 1px solid #c0c0c0;
  color: #0000e6;
  font: bold 10px/10px "DejaVu Sans", sans-serif;
  text-align: center;
  vertical-align: -1px;
  white-space: pre;
`;

const ToolbarRow = styled.div`
  display: flex;
  align-items: center;
  flex: none;
  height: 26px;
  background: #eeeef2;
`;

const ToolButton = styled.button`
  display: grid;
  place-items: center;
  flex: none;
  width: 22px;
  height: 22px;
  border: 1px solid ${(p) => (p.$active ? "#3399ff" : "transparent")};
  background: ${(p) => (p.$active ? "#f3f7fc" : "none")};
`;

const Divider = styled.i`
  flex: none;
  width: 1px;
  height: 20px;
  margin: 0 3px 0 2px;
  background: #ccceda;
`;

const ToolText = styled.span`
  display: flex;
  align-items: center;
  flex: none;
  gap: 3px;
  width: ${(p) => p.$width}px;
  height: 22px;
  padding-left: 4px;
  font-size: 12px;
`;

const TextTool = styled.button`
  width: 20px;
  font-weight: 700;
`;

const ViewportBox = styled.section`
  display: grid;
  flex: 1;
  min-height: 0;
  overflow: hidden;
  background: #fff;
  color: #000;
`;

const Scene = styled.svg`
  grid-area: 1 / 1;
  width: 100%;
  height: 100%;
  min-height: 0;
`;

const PlotInfo = styled.div`
  display: flex;
  grid-area: 1 / 1;
  flex-direction: column;
  justify-self: start;
  align-self: start;
  padding: 14px 0 0 15px;
  line-height: 15px;
`;

const Legend = styled.div`
  display: flex;
  gap: 8px;
  margin-top: 14px;
`;

const LegendBar = styled.div`
  display: flex;
  flex-direction: column;
  width: 16px;
  height: 152px;
  margin-top: 8px;
  border: 1px solid #333;
`;

const Swatch = styled.i`
  flex: 1;
  background: ${(p) => p.$color};
  & + & {
    border-top: 1px solid #333;
  }
`;

const LegendLabels = styled.div`
  display: flex;
  flex-direction: column;
  justify-content: space-between;
  height: 164px;
`;

const BottomRow = styled.div`
  display: grid;
  grid-template-columns: 812fr 807fr;
  flex: none;
  gap: 4px;
  height: 88px;
  padding-top: 4px;
`;

const BottomPanel = styled.section`
  display: flex;
  flex-direction: column;
  min-width: 0;
  background: ${(p) => (p.$grey ? "#a0a0a0" : "#fff")};
  ${PanelHeader} {
    background: #eeeef0;
  }
`;

const CyclesInput = styled.input`
  width: 59px;
  height: 22px;
  margin: 0 2px 0 1px;
  padding-left: 3px;
  border: 1px solid #ccceda;
  color: #a3a3a3;
`;

const GraphArea = styled.div`
  padding: 14px 24px 0 51px;
`;

const Timeline = styled.div`
  height: 15px;
  border: 1px solid #a0a0a0;
  background:
    linear-gradient(#000, #000) 0 6px / 100% 1px no-repeat,
    linear-gradient(#000, #000) 0 9px / 100% 1px no-repeat;
`;

const DataTable = styled.table`
  align-self: flex-start;
  border-collapse: collapse;
  table-layout: fixed;
  width: 365px;
  color: #000;
  th,
  td {
    height: 16px;
    padding: 0 3px;
    border: 1px solid #b4b8bc;
    border-width: 0 1px 1px 0;
    background: #e1e5e9;
    font-weight: 400;
    line-height: 14px;
    text-align: left;
  }
  th {
    border-color: #777;
    background: #f5f5f5;
  }
`;

const HeadCell = styled.th`
  width: ${(p) => p.$width}px;
`;

const HeadLabel = styled.label`
  display: flex;
  align-items: center;
  gap: 6px;
  height: 17px;
  color: ${(p) => p.$color};
`;
